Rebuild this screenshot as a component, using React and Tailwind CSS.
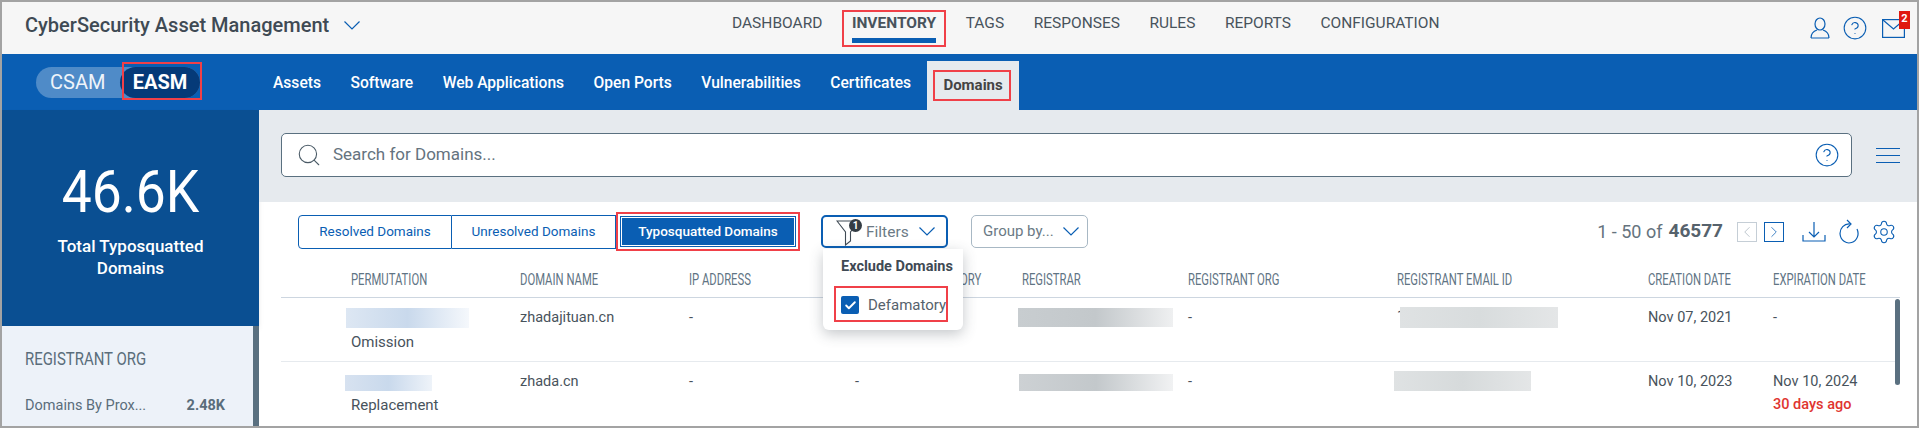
import React from 'react';
import { Settings, Search, ChevronLeft, ChevronRight, Check, CircleHelp } from 'lucide-react';

const topNav = ['DASHBOARD', 'INVENTORY', 'TAGS', 'RESPONSES', 'RULES', 'REPORTS', 'CONFIGURATION'];
const subNav = ['Assets', 'Software', 'Web Applications', 'Open Ports', 'Vulnerabilities', 'Certificates'];
const columns = ['PERMUTATION', 'DOMAIN NAME', 'IP ADDRESS', 'DOMAIN SUB CATEGORY', 'REGISTRAR', 'REGISTRANT ORG', 'REGISTRANT EMAIL ID', 'CREATION DATE', 'EXPIRATION DATE'];

const UserIcon = () => (
  <svg width="20" height="22" viewBox="0 0 20 22" fill="none" stroke="#0a5eb3" strokeWidth="1.2">
    <ellipse cx="10" cy="7" rx="5" ry="6" />
    <path d="M1 21c0-5 3-7 6-8M19 21c0-5-3-7-6-8M1 21h18" />
  </svg>
);

const MailIcon = () => (
  <svg width="23" height="19" viewBox="0 0 23 19" fill="none" stroke="#0a5eb3" strokeWidth="1.2">
    <rect x="0.6" y="0.6" width="21.8" height="17.8" />
    <path d="M1 1l10.500 9L22 1" />
  </svg>
);

const FunnelIcon = () => (
  <svg width="24" height="28" viewBox="0 0 24 28" fill="none" stroke="#3f4a54" strokeWidth="1.1">
    <path d="M1 3h22l-8.500 11v9l-5 4V14z" />
  </svg>
);

const DownloadIcon = () => (
  <svg width="24" height="24" viewBox="0 0 24 24" fill="none" stroke="#0a5eb3" strokeWidth="1.2">
    <path d="M12 2v15M7 12l5 5 5-5M1 15v6h22v-6" />
  </svg>
);

const RefreshIcon = () => (
  <svg width="20" height="25" viewBox="0 0 20 25" fill="none" stroke="#0a5eb3" strokeWidth="1.2">
    <path d="M11 5a9 9.500 0 1 0 7 5" />
    <path d="M8 1l4 4-4 4" />
  </svg>
);

const Chevron = ({ className }) => (
  <svg width="16" height="9" viewBox="0 0 16 9" fill="none" stroke="#0a5eb3" strokeWidth="1.2" className={className}>
    <path d="M0.500 0.500L8 8l7.500-7.500" />
  </svg>
);

const RedBox = ({ className }) => (
  <span className={`absolute border-2 border-[#f04048] pointer-events-none ${className}`} />
);

const Blur = ({ className }) => <div className={`bg-linear-to-r ${className}`} />;

export default function App() {
  return (
    <div className="w-[1919px] h-[428px] overflow-hidden flex flex-col border-2 border-[#a3a3a3] bg-white [font-family:Roboto,sans-serif] text-[#48535c]">
      {/* top header */}
      <div className="h-[52px] shrink-0 flex bg-[#f6f6f6]">
        <div className="w-[730px] flex items-center pl-[23px] pb-[6px]">
          <span className="text-[20px] font-medium text-[#3f4a54]">CyberSecurity Asset Management</span>
          <Chevron className="ml-[15px]" />
        </div>
        <div className="flex gap-[29.5px] pt-[12px] text-[15.5px] leading-[19px]">
          {topNav.map((item) => (
            <div key={item} className={`relative h-[27px] ${item === 'INVENTORY' ? 'font-bold border-b-[5px] border-[#0a5eb3] h-[29px]' : ''}`}>
              {item}
              {item === 'INVENTORY' && <RedBox className="-left-[10px] -right-[10px] -top-[4px] -bottom-[9px]" />}
            </div>
          ))}
        </div>
        <div className="ml-auto flex items-start gap-[14px] pr-[10px] pt-[14px]">
          <span className="mt-[1px] -mr-[2px]"><UserIcon /></span>
          <CircleHelp size={26} strokeWidth={1} className="text-[#0a5eb3] -mt-[1px]" />
          <div className="relative mt-[3px] mr-[2px]">
            <MailIcon />
            <span className="absolute -top-[8px] -right-[5px] w-[11px] h-[18px] bg-[#e0190f] text-white text-[11px] font-bold leading-[16px] text-center">2</span>
          </div>
        </div>
      </div>

      {/* blue sub nav */}
      <div className="h-[56px] shrink-0 flex bg-[#0a5eb3] text-white">
        <div className="w-[271px] pl-[34px] pt-[13px]">
          <div className="relative flex w-[164px] h-[31px] rounded-full bg-[#4f8bc8] text-[20px]">
            <span className="w-[84px] pl-[14px] leading-[30px] text-[#eef4fa]">CSAM</span>
            <span className="w-[80px] rounded-full bg-[#053a78] text-center font-bold leading-[30px]">EASM</span>
            <RedBox className="left-[86px] -right-[2px] -top-[5px] -bottom-[2px]" />
          </div>
        </div>
        <div className="flex gap-[29.5px] h-full items-center text-[15.6px] font-medium pt-[3px]">
          {subNav.map((item) => (
            <span key={item}>{item}</span>
          ))}
        </div>
        <div className="relative ml-[16px] mt-[7px] w-[92px] bg-[#e6eaee] text-[#444] text-[15px] font-bold flex items-center justify-center">
          Domains
          <RedBox className="left-[6px] right-[8px] top-[9px] bottom-[9px]" />
        </div>
      </div>

      <div className="flex flex-1 min-h-0">
        {/* left panel */}
        <div className="w-[257px] shrink-0 flex flex-col">
          <div className="h-[216px] shrink-0 bg-[#0a4f92] text-white text-center pt-[49px] shadow-md">
            <div className="text-[60px] font-normal leading-[66px] scale-x-[0.89]">46.6K</div>
            <div className="mt-[10px] text-[17px] font-medium leading-[22px] px-[30px]">Total Typosquatted Domains</div>
          </div>
          <div className="flex flex-1 min-h-0">
            <div className="flex-1 bg-[#edf2f9] pl-[23px] pr-[28px] pt-[22px]">
              <div className="text-[18px] text-[#5a6d7b] leading-[22px] whitespace-nowrap origin-left scale-x-[0.83]">REGISTRANT ORG</div>
              <div className="mt-[25px] flex justify-between text-[14.5px] text-[#5a6d7b]">
                <span>Domains By Prox...</span>
                <span className="font-bold">2.48K</span>
              </div>
            </div>
            <div className="w-[6px] bg-[#5a7080]" />
          </div>
        </div>

        {/* main */}
        <div className="flex-1 min-w-0 flex flex-col">
          <div className="h-[92px] shrink-0 bg-[#e6eaee] pl-[22px] pt-[23px] flex items-start">
            <div className="w-[1571px] h-[44px] bg-white border border-[#5a7080] rounded-[5px] flex items-center pl-[14px] pr-[11px]">
              <Search size={26} strokeWidth={1} className="text-[#4a5a66]" />
              <span className="ml-[11px] text-[17px] text-[#65737e]">Search for Domains...</span>
              <CircleHelp size={26} strokeWidth={1} className="ml-auto text-[#0a5eb3]" />
            </div>
            <div className="ml-[24px] mt-[15px] w-[24px] flex flex-col gap-[6px]">
              <div className="h-px bg-[#0a5eb3]" />
              <div className="h-px bg-[#0a5eb3]" />
              <div className="h-px bg-[#0a5eb3]" />
            </div>
          </div>

          <div className="relative flex-1 min-h-0">
            {/* toolbar */}
            <div className="h-[49px] pt-[10px] pl-[39px] flex items-center">
              <div className="flex items-center">
                <div className="w-[154px] h-[34px] border border-[#0a5eb3] rounded-l-[4px] flex items-center justify-center text-[13.5px] text-[#0a5eb3]">Resolved Domains</div>
                <div className="w-[164px] h-[34px] border-y border-r border-[#0a5eb3] flex items-center justify-center text-[13.5px] text-[#0a5eb3]">Unresolved Domains</div>
                <div className="w-[184px] h-[39px] border-2 border-[#f04048] p-[2px]">
                  <div className="h-full border border-[#0a5eb3] p-px">
                    <div className="h-full bg-[#0a5eb3] text-white text-[13.5px] font-medium flex items-center justify-center">Typosquatted Domains</div>
                  </div>
                </div>
              </div>
              <div className="relative ml-[21px] w-[127px] h-[33px] border-2 border-[#0a5eb3] rounded-[5px] flex items-center pl-[13px]">
                <FunnelIcon />
                <span className="absolute left-[26px] top-[2px] w-[13px] h-[13px] rounded-full bg-[#333c44] text-white text-[10px] font-bold leading-[13px] text-center">1</span>
                <span className="ml-[6px] pt-[2px] text-[15.5px] text-[#6b7a85]">Filters</span>
                <Chevron className="ml-[10px]" />
                {/* filter dropdown */}
                <div className="absolute z-10 left-[0px] top-[32px] w-[140px] h-[81px] bg-white rounded-b-[6px] shadow-[0_4px_14px_rgba(60,70,80,0.3)] pl-[18px] pt-[9px]">
                  <div className="text-[14.5px] font-bold text-[#3f4a54] leading-[18px] whitespace-nowrap">Exclude Domains</div>
                  <div className="relative mt-[18px] flex items-center">
                    <span className="w-[18px] h-[18px] bg-[#0a5eb3] rounded-[2px] flex items-center justify-center">
                      <Check size={13} strokeWidth={3.5} className="text-white" />
                    </span>
                    <span className="ml-[9px] text-[15px] text-[#56626c]">Defamatory</span>
                    <RedBox className="left-[-7px] w-[114px] -top-[8px] -bottom-[5px]" />
                  </div>
                </div>
              </div>
              <div className="ml-[23px] w-[117px] h-[33px] border border-[#a8b8c4] rounded-[5px] flex items-center pl-[11px] text-[15px] text-[#6b7a85]">
                Group by...
                <Chevron className="ml-[9px]" />
              </div>
              <div className="ml-auto pr-[20px] flex items-center">
                <span className="text-[18px] text-[#65737e]">1 - 50 of</span>
                <span className="ml-[6px] text-[19px] font-bold text-[#56626c]">46577</span>
                <span className="ml-[14px] w-[20px] h-[20px] border border-[#c5ced6] flex items-center justify-center text-[#a8b4bd]"><ChevronLeft size={20} strokeWidth={1} /></span>
                <span className="ml-[7px] w-[20px] h-[20px] border border-[#0a5eb3] flex items-center justify-center text-[#0a5eb3]"><ChevronRight size={20} strokeWidth={1} /></span>
                <span className="ml-[18px]"><DownloadIcon /></span>
                <span className="ml-[13px]"><RefreshIcon /></span>
                <Settings size={26} strokeWidth={1} className="ml-[12px] text-[#0a5eb3]" />
              </div>
            </div>

            {/* table */}
            <div className="relative ml-[22px] w-[1619px]">
              <div className="h-[47px] pt-[11px] pl-[70px] border-b border-[#cdd6e0] grid grid-cols-[169px_169px_166px_167px_166px_209px_251px_125px_1fr] items-center text-[16px] text-[#5f7484]">
                {columns.map((col) => (
                  <span key={col} className="whitespace-nowrap inline-block origin-left scale-x-[0.705]">{col}</span>
                ))}
              </div>
              <div className="h-[64px] pt-[11px] pl-[70px] border-b border-[#e6eaee] grid grid-cols-[169px_169px_166px_167px_166px_209px_251px_125px_1fr] text-[14.5px] leading-[18px]">
                <div>
                  <Blur className="-ml-[5px] -mt-px w-[123px] h-[20px] from-[#dde7f3] via-[#c9d9ec] to-[#f5f8fc]" />
                  <div className="mt-[2px] leading-[24px] text-[15px]">Omission</div>
                </div>
                <div>zhadajituan.cn</div>
                <div>-</div>
                <div />
                <Blur className="-ml-[4px] -mt-px w-[155px] h-[19px] from-[#c8cdd0] via-[#c3c8cb] to-[#eff0f1]" />
                <div>-</div>
                <div className="flex -mt-[2px]">
                  <span className="w-[3px] leading-[20px]">1</span>
                  <Blur className="w-[158px] h-[21px] from-[#dfe2e3] via-[#d8dcdd] to-[#e4e6e7]" />
                </div>
                <div>Nov 07, 2021</div>
                <div>-</div>
              </div>
              <div className="h-[64px] pt-[11px] pl-[70px] grid grid-cols-[169px_169px_166px_167px_166px_209px_251px_125px_1fr] text-[14.5px] leading-[18px]">
                <div>
                  <Blur className="-ml-[6px] mt-[2px] w-[87px] h-[16px] from-[#d7e2f0] via-[#c9d9ec] to-[#eef3f9]" />
                  <div className="mt-[2px] leading-[24px] text-[15px]">Replacement</div>
                </div>
                <div>zhada.cn</div>
                <div>-</div>
                <div>-</div>
                <Blur className="-ml-[3px] mt-[1px] w-[154px] h-[17px] from-[#cdd1d4] via-[#c3c8cb] to-[#f1f2f3]" />
                <div>-</div>
                <Blur className="-ml-[3px] -mt-[2px] w-[137px] h-[20px] from-[#dfe2e3] via-[#d6dadb] to-[#e4e6e7]" />
                <div>Nov 10, 2023</div>
                <div>
                  <div>Nov 10, 2024</div>
                  <div className="mt-[5px] text-[14.5px] font-medium text-[#e0352f]">30 days ago</div>
                </div>
              </div>
              {/* scrollbar */}
              <div className="absolute right-[0px] top-[48px] w-[5px] h-[86px] rounded-full bg-[#5a7080]" />
            </div>
          </div>
        </div>
      </div>
    </div>
  );
}
